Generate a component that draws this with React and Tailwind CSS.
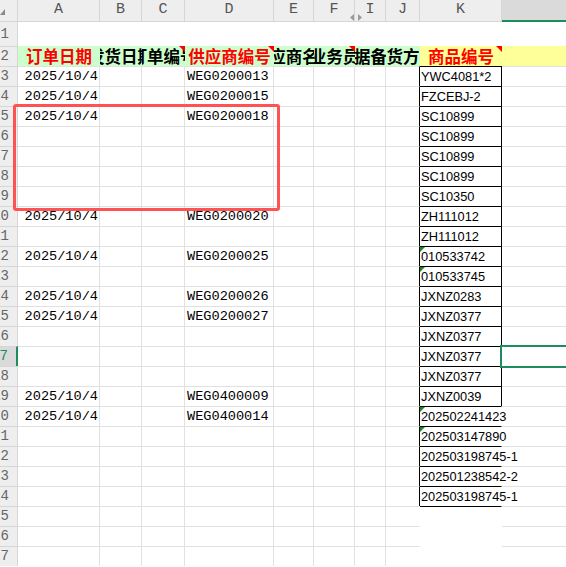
const COLS = [
  { id: "A", w: "w-[82px]" },
  { id: "B", w: "w-[42px]" },
  { id: "C", w: "w-[43px]" },
  { id: "D", w: "w-[89px]" },
  { id: "E", w: "w-[40px]" },
  { id: "F", w: "w-[41px]" },
  { id: "I", w: "w-[31px]" },
  { id: "J", w: "w-[34px]" },
  { id: "K", w: "w-[82px]" },
];

const HEAD = {
  A: { t: "订单日期", red: true },
  B: { t: "发货日期" },
  C: { t: "订单编号", note: true },
  D: { t: "供应商编号", red: true, note: true },
  E: { t: "供应商名称" },
  F: { t: "业务员", note: true },
  I: { t: "单据备注" },
  J: { t: "货方" },
  K: { t: "商品编号", red: true, note: true },
};

const DATES = {
  3: "WEG0200013",
  4: "WEG0200015",
  5: "WEG0200018",
  10: "WEG0200020",
  12: "WEG0200025",
  14: "WEG0200026",
  15: "WEG0200027",
  19: "WEG0400009",
  20: "WEG0400014",
};

const GOODS = [
  "YWC4081*2", "FZCEBJ-2", "SC10899", "SC10899", "SC10899", "SC10899",
  "SC10350", "ZH111012", "ZH111012", "010533742", "010533745", "JXNZ0283",
  "JXNZ0377", "JXNZ0377", "JXNZ0377", "JXNZ0377", "JXNZ0039",
  "202502241423", "202503147890", "202503198745-1", "202501238542-2",
  "202503198745-1",
];
const TEXT_NUM = [12, 13, 20, 21];

const mono = { fontFamily: '"Liberation Mono", monospace' };
const cjk = { fontFamily: '"Noto Sans CJK SC", sans-serif' };
const sans = { fontFamily: '"Liberation Sans", sans-serif' };

function NoteMark() {
  return (
    <span className="absolute top-0 right-0 w-0 h-0 border-l-[6px] border-l-transparent border-t-[6px] border-t-[#f00]" />
  );
}

function GreenMark() {
  return (
    <span className="absolute top-0 left-0 w-0 h-0 border-r-[5px] border-r-transparent border-t-[5px] border-t-[#1b8a1b]" />
  );
}

function HeaderRow() {
  return (
    <div className="flex h-[22px]">
      <div className="w-[18px] shrink-0 bg-[#eeeeee] border-r border-b border-[#d6d6d6]" />
      {COLS.map((c) => (
        <div
          key={c.id}
          className={`${c.w} shrink-0 bg-[#eeeeee] border-r border-b border-[#d6d6d6] flex items-center justify-center text-[15px] text-[#555]`}
          style={mono}
        >
          {c.id}
        </div>
      ))}
      <div className="flex-1 bg-[#dadada] border-b-2 border-[#1f8c5c]" />
    </div>
  );
}

function RowHead({ n }) {
  const sel = n === 17;
  return (
    <div
      className={`w-[18px] shrink-0 overflow-hidden flex items-center justify-end pr-[8px] text-[14px] ${
        sel
          ? "bg-[#dadada] text-[#1f8c5c] border-r-2 border-r-[#1f8c5c]"
          : "bg-[#eeeeee] text-[#666] border-r border-r-[#d6d6d6]"
      } ${n > 1 ? "border-t border-t-[#d6d6d6]" : ""}`}
      style={mono}
    >
      {n}
    </div>
  );
}

function TitleRow() {
  return (
    <div className="flex h-[20px]">
      <RowHead n={2} />
      {COLS.map((c) => {
        const h = HEAD[c.id];
        const k = c.id === "K";
        return (
          <div
            key={c.id}
            className={`${c.w} shrink-0 relative overflow-hidden flex items-center justify-center whitespace-nowrap text-[16.5px] font-bold ${
              k ? "bg-[#ffff99]" : "bg-[#ccffcc]"
            } ${h.red ? "text-[#f00]" : "text-black"}`}
            style={cjk}
          >
            <span className="shrink-0">{h.t}</span>
            {h.note && <NoteMark />}
          </div>
        );
      })}
      <div className="flex-1 bg-[#ffff99]" />
    </div>
  );
}

function DataRow({ n }) {
  const good = GOODS[n - 3];
  const boxed = n >= 3 && n <= 19;
  const kTop = n >= 3 && n <= 25;
  const jRight = n >= 3 && n <= 24;
  return (
    <div className="flex h-[20px]">
      <RowHead n={n} />
      {COLS.map((c) => {
        if (c.id === "K") {
          return (
            <div
              key={c.id}
              className={`${c.w} shrink-0 relative flex items-center whitespace-nowrap pl-[1px] pt-[1px] text-[12.8px] text-black border-t border-r ${
                kTop ? "border-t-black" : "border-t-white"
              } ${boxed ? "border-r-black overflow-hidden" : "border-r-white"}`}
              style={sans}
            >
              {good}
              {TEXT_NUM.includes(n) && <GreenMark />}
            </div>
          );
        }
        let right = "border-r-[#e1e1e1]";
        if (c.id === "J") right = jRight ? "border-r-black" : "border-r-white";
        let body = null;
        if (c.id === "A" && DATES[n]) {
          body = <span className="ml-auto pr-[1px]">2025/10/4</span>;
        }
        if (c.id === "D" && DATES[n]) {
          body = <span className="pl-[2px]">{DATES[n]}</span>;
        }
        return (
          <div
            key={c.id}
            className={`${c.w} shrink-0 flex items-center pt-[2px] overflow-hidden whitespace-nowrap text-[13.6px] text-black border-t border-r border-t-[#e1e1e1] ${right}`}
            style={mono}
          >
            {body}
          </div>
        );
      })}
      <div className="flex-1 border-t border-t-[#e1e1e1]" />
    </div>
  );
}

export default function App() {
  const rows = [];
  for (let n = 3; n <= 27; n++) rows.push(<DataRow key={n} n={n} />);
  return (
    <div className="relative w-[566px] h-[567px] overflow-hidden bg-white">
      <HeaderRow />
      <div className="flex h-[24px]">
        <RowHead n={1} />
        <div className="flex-1" />
      </div>
      <TitleRow />
      {rows}

      <svg className="absolute left-0 top-[9px]" width="6" height="7" viewBox="0 0 6 7">
        <polygon points="5,0 5,6 0,6" fill="#8a8a8a" />
      </svg>
      <svg className="absolute left-[349px] top-[14px]" width="14" height="7" viewBox="0 0 14 7">
        <polygon points="5,0 5,7 1,3.5" fill="#9a9a9a" />
        <polygon points="9,0 9,7 13,3.5" fill="#9a9a9a" />
      </svg>
      <div className="absolute left-[13px] top-[104px] w-[267px] h-[107px] border-[3px] border-[#ff5252] rounded-[3px]" />
      <div className="absolute left-[500px] top-[345px] w-[80px] h-[23px] border-2 border-[#1f8c5c]" />
    </div>
  );
}
